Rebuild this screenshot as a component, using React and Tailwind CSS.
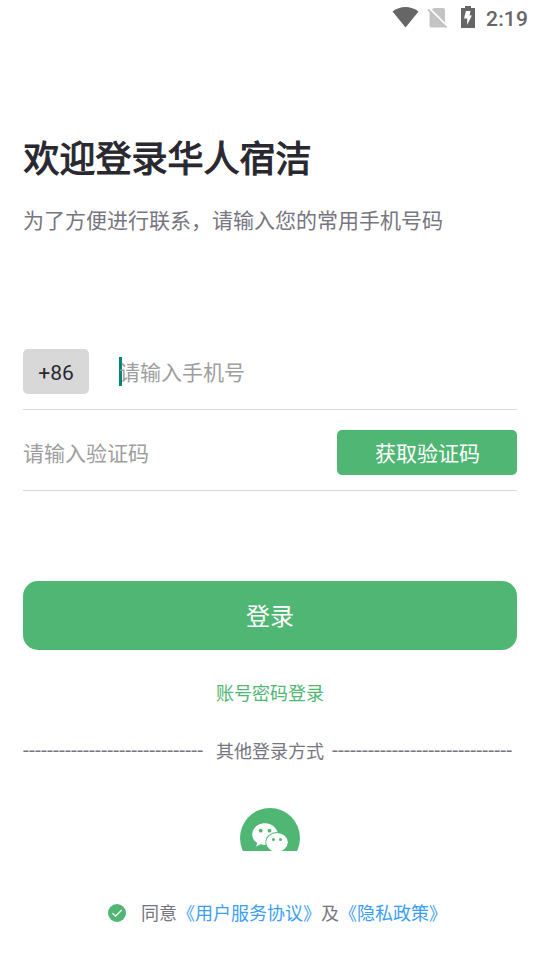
const DASHES = "-".repeat(30);

function StatusBar() {
  return (
    <div className="flex h-9 items-center pl-[392px] text-[#666666]">
      <svg className="h-[36px] w-[92px] shrink-0" viewBox="392 0 92 36" fill="none">
        <path d="M392.500 11.600C400 5.600 411 5.600 418.500 11.600L405.500 27.600Z" fill="#666666" />
        <path d="M433.500 8H443a2 2 0 0 1 2 2V26a1.500 1.500 0 0 1-1.500 1.500H431.500a2 2 0 0 1-2-2V12Z" fill="#c4c4c4" />
        <path d="M428 7.500L447 26.500" stroke="#ffffff" strokeWidth="2.500" />
        <path d="M428 9.300L446.500 27.700" stroke="#c0c0c0" strokeWidth="1.700" />
        <path d="M465 6h6v2h4v20h-14V8h4Z" fill="#666666" />
        <path d="M466 11h4.500l-1 4.500h2.500L467 25l.3-6.500H464Z" fill="#ffffff" />
      </svg>
      <span className="ml-[2px] mt-[2px] font-[Roboto] text-[21px] font-medium leading-6 tracking-[0.200px]">2:19</span>
    </div>
  );
}

function WechatIcon() {
  return (
    <svg className="h-[43px] w-[60px]" viewBox="0 0 60 43">
      <circle cx="30" cy="30" r="30" fill="#50b674" />
      <path
        d="M25 15.300c-7.200 0-12.800 4.900-12.800 11.200 0 3.600 1.900 6.500 5 8.500l-1.200 3.500 4.500-2.200c1.500.4 2.900.7 4.500.7 7.200 0 12.900-4.800 12.900-10.500S32.200 15.300 25 15.300Z"
        fill="#fff"
      />
      <ellipse cx="37" cy="34.300" rx="11.600" ry="10.200" fill="#50b674" />
      <ellipse cx="37" cy="34.300" rx="10.800" ry="9.400" fill="#fff" />
      <circle cx="20.700" cy="22.700" r="1.900" fill="#50b674" />
      <circle cx="29.500" cy="22.700" r="1.900" fill="#50b674" />
      <circle cx="33.500" cy="31.400" r="1.500" fill="#50b674" />
      <circle cx="40.500" cy="31.400" r="1.500" fill="#50b674" />
    </svg>
  );
}

function Agreement() {
  return (
    <div className="mt-[49px] flex h-[26px] items-center pl-[85px] text-[18px] leading-[26px] text-[#777680]">
      <svg className="mr-[15px] h-[18px] w-[18px] shrink-0" viewBox="0 0 18 18" fill="none">
        <circle cx="9" cy="9" r="9" fill="#50b674" />
        <path d="M4.500 9.200L7.600 12.200L13.700 6" stroke="#fff" strokeWidth="1.300" />
      </svg>
      <p className="whitespace-nowrap pb-[2px]">
        同意<span className="text-[#3b9ef5]">《用户服务协议》</span>及
        <span className="text-[#3b9ef5]">《隐私政策》</span>
      </p>
    </div>
  );
}

export default function App() {
  return (
    <div className="h-[960px] w-[540px] overflow-hidden bg-white font-['Noto_Sans_CJK_SC',sans-serif]">
      <StatusBar />
      <main className="px-[23px]">
        <h1 className="mt-[94px] pl-[0.500px] text-[36px] font-normal leading-[52px] text-[#292830] [-webkit-text-stroke:1.1px_#292830]">
          欢迎登录华人宿洁
        </h1>
        <p className="mt-[22px] text-[21px] leading-[30px] text-[#777680]">为了方便进行联系，请输入您的常用手机号码</p>

        <div className="mt-[115px] flex h-[61px] items-start border-b border-[#d8d8d8]">
          <div className="flex h-[45px] w-[66px] items-center justify-center rounded-[5px] bg-[#d8d8d8] pt-[4px] font-[Roboto] text-[21px] text-[#292830]">
            +86
          </div>
          <div className="relative ml-[30px] h-[45px] text-[21px] leading-[45px] text-[#9e9e9e]">
            <span className="absolute left-0 top-[8px] h-[29px] w-[3px] bg-[#008577]" />
            <span className="relative">请输入手机号</span>
          </div>
        </div>

        <div className="mt-[20px] flex h-[61px] items-start justify-between border-b border-[#d8d8d8]">
          <span className="text-[21px] leading-[45px] text-[#9e9e9e]">请输入验证码</span>
          <button className="h-[45px] w-[180px] rounded-[5px] bg-[#50b674] pl-px text-[21px] leading-[45px] text-white">
            获取验证码
          </button>
        </div>

        <button className="mt-[90px] block h-[69px] w-full rounded-[15px] bg-[#50b674] pb-[2px] text-[24px] leading-[67px] text-white">
          登录
        </button>
        <p className="mt-[29px] text-center text-[18px] leading-[26px] text-[#50b674]">账号密码登录</p>

        <div className="mt-[32px] flex h-[26px] text-[18px] leading-[26px] text-[#777680]">
          <span className="w-[193px] whitespace-nowrap font-[Roboto] text-[21px] leading-[27px] tracking-[0.206px]">{DASHES}</span>
          <span className="w-[116px] whitespace-nowrap">其他登录方式</span>
          <span className="whitespace-nowrap font-[Roboto] text-[21px] leading-[27px] tracking-[0.206px]">{DASHES}</span>
        </div>

        <div className="mt-[45px] flex h-[43px] justify-center">
          <WechatIcon />
        </div>
        <Agreement />
      </main>
    </div>
  );
}
